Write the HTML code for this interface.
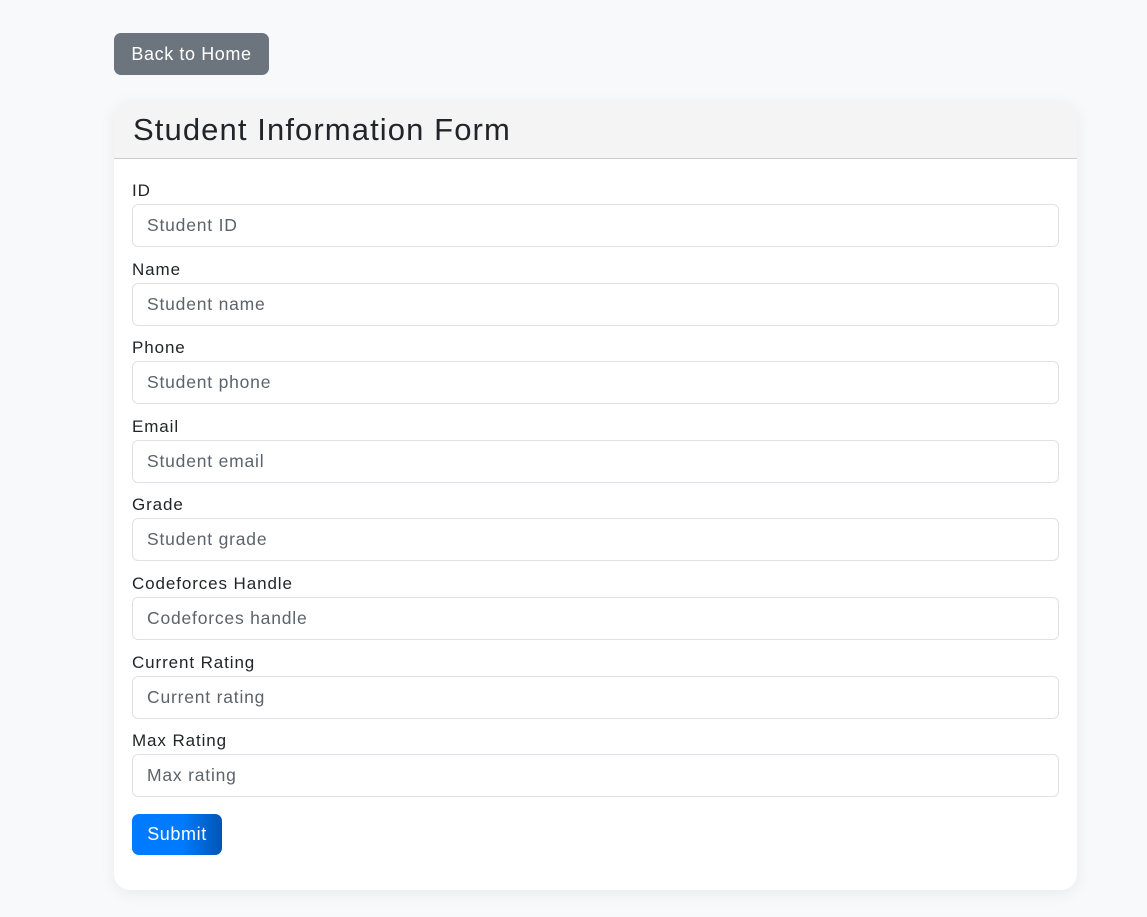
<!DOCTYPE html>
<html><head><style>
*{box-sizing:border-box;margin:0;padding:0}
body{width:1147px;height:917px;background:#f8f9fa;font-family:"Liberation Sans",sans-serif;position:relative;overflow:hidden}
.back{position:absolute;left:114px;top:33px;width:155px;height:42px;background:#6c757d;color:#fff;border-radius:7px;font-size:18px;letter-spacing:0.6px;line-height:43px;text-align:center}
.card{position:absolute;left:114px;top:100px;width:963px;height:790px;background:#fff;border-radius:16px;box-shadow:0 4px 16px rgba(0,0,0,0.06);overflow:hidden}
.hd{height:59px;background:#f4f4f4;border-bottom:1px solid #ccc;padding-left:19px;font-size:31px;letter-spacing:1.1px;line-height:60px;color:#212529}
.body{padding:19px 18px 0 18px}
.f{height:78.6px}
label{display:block;font-size:17px;letter-spacing:0.9px;color:#212529;height:26px;line-height:26px}
.in{height:43px;border:1px solid #dee2e6;border-radius:6px;padding-left:14px;line-height:41px;font-size:17.5px;letter-spacing:0.8px;color:#5c636a}
.sub{margin-top:7px;width:90px;height:41px;border-radius:7px;background:linear-gradient(90deg,#007bff 0%,#007bff 55%,#0056b3 100%);color:#fff;font-size:18px;letter-spacing:0.6px;line-height:41px;text-align:center}
</style></head><body>
<div class="back">Back to Home</div>
<div class="card">
<div class="hd">Student Information Form</div>
<div class="body">
<div class="f"><label>ID</label><div class="in">Student ID</div></div>
<div class="f"><label>Name</label><div class="in">Student name</div></div>
<div class="f"><label>Phone</label><div class="in">Student phone</div></div>
<div class="f"><label>Email</label><div class="in">Student email</div></div>
<div class="f"><label>Grade</label><div class="in">Student grade</div></div>
<div class="f"><label>Codeforces Handle</label><div class="in">Codeforces handle</div></div>
<div class="f"><label>Current Rating</label><div class="in">Current rating</div></div>
<div class="f"><label>Max Rating</label><div class="in">Max rating</div></div>
<div class="sub">Submit</div>
</div></div>
</body></html>
